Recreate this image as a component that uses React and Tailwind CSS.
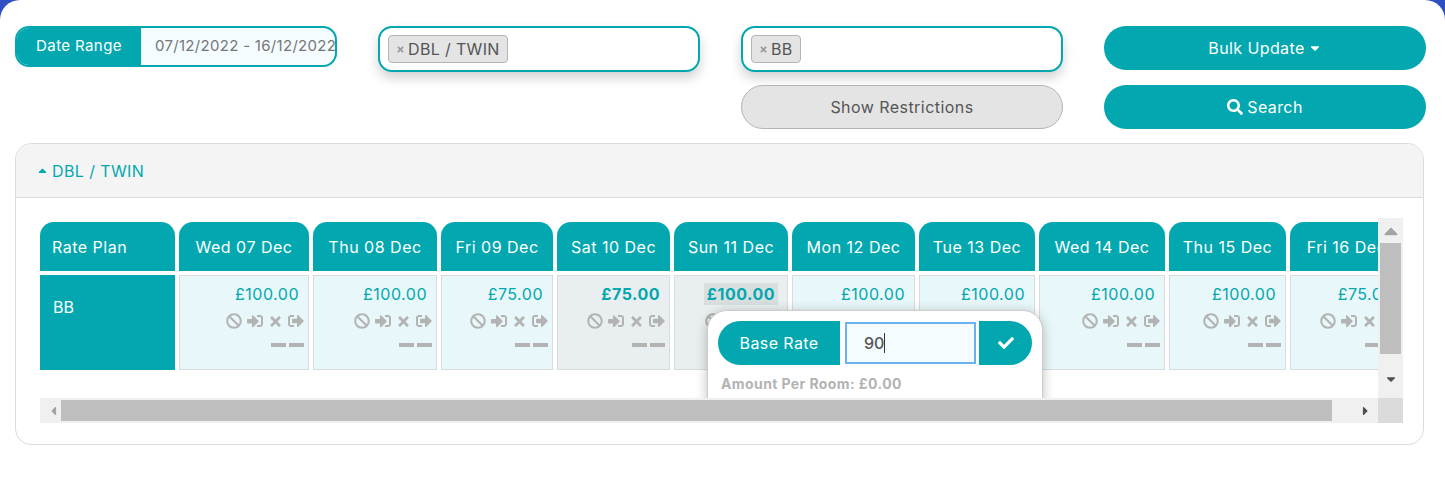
import React from 'react';
import { FaBan, FaCaretDown, FaCaretUp, FaCheck, FaSearch, FaSignInAlt, FaSignOutAlt, FaTimes } from 'react-icons/fa';

const DAYS = [
  { label: 'Wed 07 Dec', price: '£100.00', width: 'w-[130px]' },
  { label: 'Thu 08 Dec', price: '£100.00', width: 'w-[124px]' },
  { label: 'Fri 09 Dec', price: '£75.00', width: 'w-[112px]' },
  { label: 'Sat 10 Dec', price: '£75.00', width: 'w-[113px]', weekend: true },
  { label: 'Sun 11 Dec', price: '£100.00', width: 'w-[114px]', weekend: true, selected: true },
  { label: 'Mon 12 Dec', price: '£100.00', width: 'w-[123px]' },
  { label: 'Tue 13 Dec', price: '£100.00', width: 'w-[116px]' },
  { label: 'Wed 14 Dec', price: '£100.00', width: 'w-[126px]' },
  { label: 'Thu 15 Dec', price: '£100.00', width: 'w-[117px]' },
  { label: 'Fri 16 Dec', price: '£75.00', width: 'w-[113px]' },
];

function Tag({ text }) {
  return (
    <span className="flex h-[28px] items-center gap-[3px] rounded-[4px] border border-[#b4b4b4] bg-[#e4e4e4] px-[7px] text-[16px] tracking-[0.35px] text-[#555]">
      <FaTimes className="text-[9px] text-[#999]" />
      {text}
    </span>
  );
}

function TagSelect({ text }) {
  return (
    <div className="flex h-[46px] items-start rounded-[14px] border-2 border-[#02a7b0] bg-white px-[8px] pt-[7px] shadow-[0_6px_12px_rgba(0,0,0,0.18)]">
      <Tag text={text} />
    </div>
  );
}

function DayCell({ day }) {
  return (
    <div className={`flex h-[95px] flex-col items-end border border-[#d8dcdf] pt-[7px] pr-[4px] ${day.weekend ? 'bg-[#e9eff0]' : 'bg-[#e8f7f9]'}`}>
      <span className={`mr-[5px] h-[22px] text-[16px] leading-[22px] tracking-[0.5px] text-[#02a7b0] ${day.selected ? 'bg-[#d9dfdf] px-[3px] font-bold' : ''} ${day.weekend ? 'font-bold' : ''}`}>
        {day.price}
      </span>
      <div className="mt-[8px] flex items-center gap-[5px] text-[16px] text-[#b3b3b3]">
        <FaBan />
        <FaSignInAlt />
        <FaTimes className="text-[15px]" />
        <FaSignOutAlt />
      </div>
      <div className="mt-[14px] flex gap-[3px]">
        <span className="h-[4px] w-[15px] bg-[#b3b3b3]" />
        <span className="h-[4px] w-[15px] bg-[#b3b3b3]" />
      </div>
    </div>
  );
}

function RatePopup() {
  return (
    <div className="absolute top-[92px] left-[667px] h-[100px] w-[336px] rounded-t-[20px] border border-[#ccc] bg-white px-[10px] pt-[10px] shadow-[0_2px_12px_rgba(0,0,0,0.25)]">
      <div className="flex h-[44px] items-center">
        <div className="flex h-full w-[122px] items-center justify-center rounded-l-[22px] bg-[#02a7b0] text-[16px] tracking-[0.4px] text-white">
          Base Rate
        </div>
        <div className="ml-[5px] flex h-[42px] w-[131px] items-center border-2 border-[#6cb2ee] bg-[#f4fcff] pl-[17px] text-[16px] font-medium text-[#555]">
          90<span className="h-[20px] w-px bg-[#333]" />
        </div>
        <div className="ml-[3px] flex h-full w-[53px] items-center justify-center rounded-r-[22px] bg-[#02a7b0] text-[16px] text-white">
          <FaCheck />
        </div>
      </div>
      <p className="mt-[8px] ml-[3px] text-[14px] font-bold tracking-[0.4px] text-[#b3b3b3]">Amount Per Room: £0.00</p>
    </div>
  );
}

export default function App() {
  return (
    <div className="h-[483px] w-[1445px] overflow-hidden bg-[#2f4fc4] font-['Inter',sans-serif]">
      <div className="h-full rounded-t-[20px] bg-white px-[15px] pt-[26px]">
        {/* Filters */}
        <div className="grid w-[1409px] grid-cols-[322px_322px_322px_322px] gap-x-[41px] gap-y-[13px]">
          <div className="flex h-[41px] overflow-hidden rounded-[14px] border-2 border-[#02a7b0] bg-[#f4fcff] text-[15px]">
            <div className="flex w-[124px] shrink-0 items-center justify-center bg-[#02a7b0] tracking-[0.4px] text-white">Date Range</div>
            <div className="flex items-center overflow-hidden pl-[14px] pr-[10px] whitespace-nowrap tracking-[0.3px] text-[#777]">07/12/2022 - 16/12/2022</div>
          </div>
          <TagSelect text="DBL / TWIN" />
          <TagSelect text="BB" />
          <button className="flex h-[44px] items-center justify-center gap-[3px] rounded-[22px] bg-[#02a7b0] text-[16px] tracking-[0.4px] text-white">
            Bulk Update <FaCaretDown className="text-[14px]" />
          </button>
          <div className="col-start-3 flex h-[44px] items-center justify-center rounded-[22px] border border-[#b4b4b4] bg-[#e4e4e4] text-[16px] tracking-[0.45px] text-[#555]">
            Show Restrictions
          </div>
          <button className="flex h-[44px] items-center justify-center gap-[4px] rounded-[22px] bg-[#02a7b0] text-[16px] tracking-[0.4px] text-white">
            <FaSearch /> Search
          </button>
        </div>

        {/* Room panel */}
        <div className="mt-[14px] h-[302px] w-[1409px] overflow-hidden rounded-[16px] border border-[#dcdcdc]">
          <div className="flex h-[54px] items-center gap-[3px] border-b border-[#dcdcdc] bg-[#f4f4f4] pl-[20px] text-[16px] tracking-[0.4px] text-[#02a7b0]">
            <FaCaretUp className="text-[13px]" /> DBL / TWIN
          </div>
          <div className="ml-[24px] mt-[20px] grid h-[205px] w-[1363px] grid-cols-[1338px_25px] grid-rows-[180px_25px]">
            {/* Rates table */}
            <div className="relative overflow-hidden pt-[4px]">
              <div className="flex gap-[4px]">
                <div className="w-[135px] shrink-0">
                  <div className="flex h-[49px] items-center rounded-t-[14px] bg-[#02a7b0] pl-[12px] text-[16px] tracking-[0.5px] text-white">Rate Plan</div>
                  <div className="mt-[4px] h-[95px] bg-[#02a7b0] pt-[20px] pl-[13px] text-[16px] leading-[24px] text-white">BB</div>
                </div>
                {DAYS.map((day) => (
                  <div key={day.label} className={`shrink-0 ${day.width}`}>
                    <div className="flex h-[49px] items-center justify-center rounded-t-[14px] bg-[#02a7b0] text-[16px] tracking-[0.5px] whitespace-nowrap text-white">{day.label}</div>
                    <div className="mt-[4px]"><DayCell day={day} /></div>
                  </div>
                ))}
              </div>
              <RatePopup />
            </div>

            {/* Vertical scrollbar */}
            <div className="flex flex-col items-center bg-[#f0f0f0]">
              <FaCaretUp className="mt-[1px] h-[24px] text-[14px] text-[#a3a3a3]" />
              <div className="h-[111px] w-[21px] bg-[#bebebe]" />
              <FaCaretDown className="mt-[18px] text-[14px] text-[#505050]" />
            </div>

            {/* Horizontal scrollbar */}
            <div className="flex items-center bg-[#f0f0f0]">
              <FaCaretUp className="ml-[6px] w-[15px] -rotate-90 text-[14px] text-[#a3a3a3]" />
              <div className="h-[21px] w-[1271px] bg-[#bebebe]" />
              <FaCaretUp className="ml-[26px] w-[15px] rotate-90 text-[14px] text-[#505050]" />
            </div>
            <div className="bg-[#dbdbdb]" />
          </div>
        </div>
      </div>
    </div>
  );
}
